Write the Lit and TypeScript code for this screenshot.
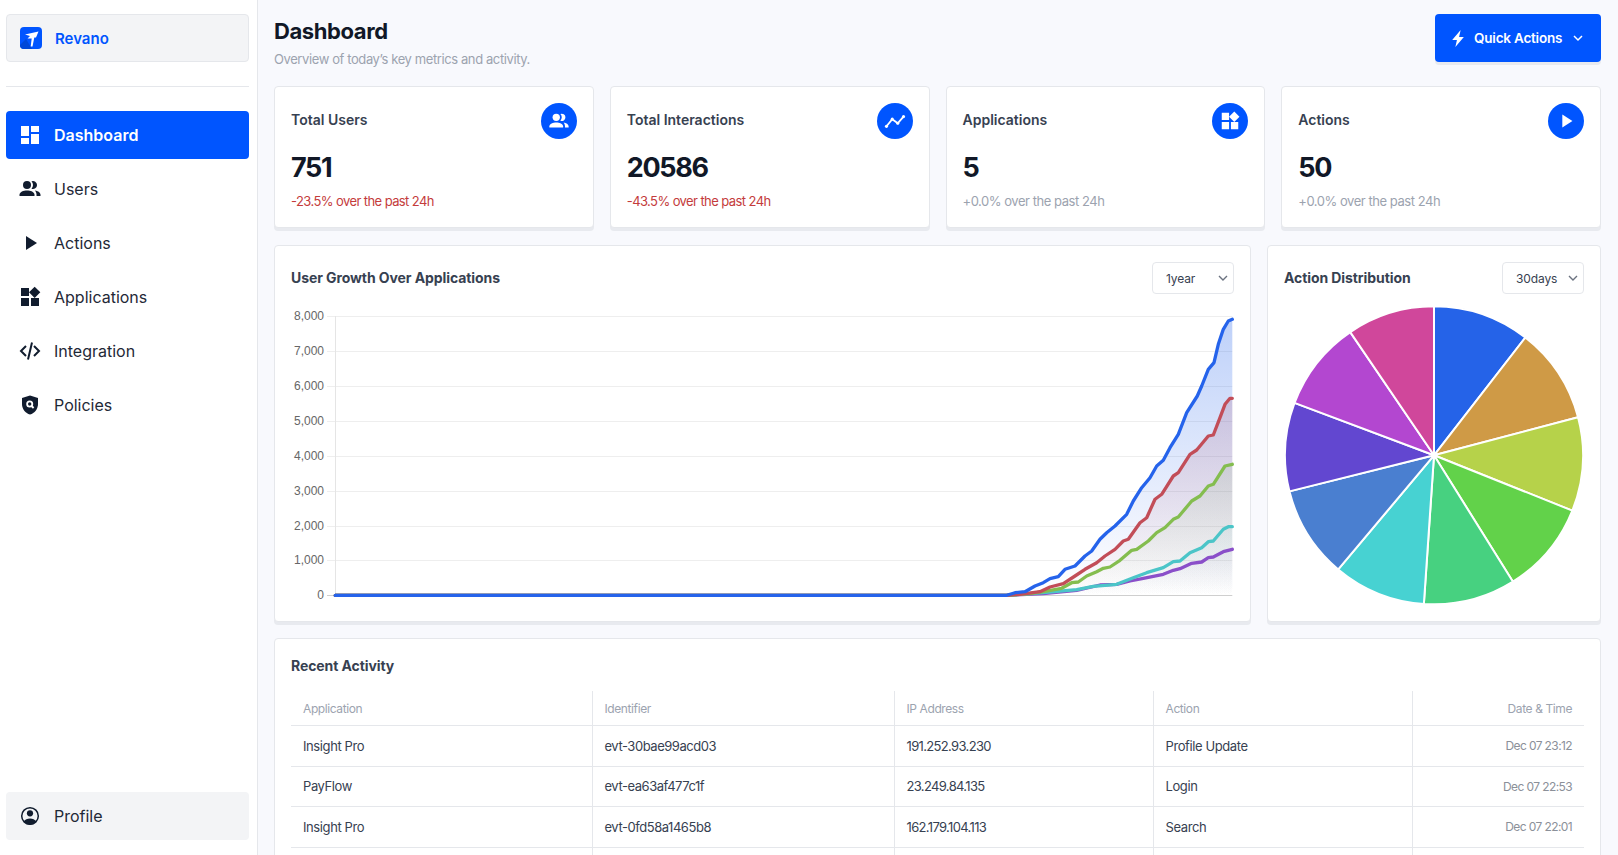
import { LitElement, html, css, svg } from "lit";
import { customElement } from "lit/decorators.js";

const ICONS: Record<string, any> = {
  dashboard: svg`<path fill="currentColor" d="M3 13h8V3H3v10zm0 8h8v-6H3v6zm10 0h8V11h-8v10zm0-18v6h8V3h-8z"/>`,
  users: svg`<g fill="currentColor"><circle cx="9" cy="8" r="4"/><path d="M1.500 19v-1.200C1.500 15 5.500 13.500 9 13.500s7.500 1.500 7.500 4.300V19z"/><path d="M13.500 4.300A4 4 0 1 1 13.500 11.700 5.300 5.300 0 0 0 13.500 4.300z"/><path d="M17 13.500c2.800.4 5.500 1.800 5.500 4.300V19h-4v-1.500c0-1.500-.6-2.800-1.500-4z"/></g>`,
  play: svg`<path fill="currentColor" d="M8 5v14l11-7z"/>`,
  apps: svg`<path fill="currentColor" d="M13 13v8h8v-8h-8zM3 21h8v-8H3v8zM3 3v8h8V3H3zm13.66-1.31L11 7.34 16.66 13l5.66-5.66-5.66-5.65z"/>`,
  code: svg`<path fill="none" stroke="currentColor" stroke-width="2" d="M8 7l-5 5 5 5M16 7l5 5-5 5M14 3.500l-4 17"/>`,
  shield: svg`<path fill="currentColor" d="M12 2.500 4 5v6c0 5 3.400 9.200 8 10.500 4.600-1.300 8-5.500 8-10.500V5z"/><circle cx="11.700" cy="11" r="2.600" fill="none" stroke="#fff" stroke-width="1.800"/><path d="M13.600 13l2 2" stroke="#fff" stroke-width="1.800"/>`,
  profile: svg`<circle cx="12" cy="12" r="8.300" fill="none" stroke="currentColor" stroke-width="1.500"/><circle cx="12" cy="9.300" r="3.100" fill="currentColor"/><path fill="currentColor" d="M5.600 17.600C7 15.600 9.500 14.500 12 14.500s5 1.100 6.400 3.100A9 9 0 0 1 12 21a9 9 0 0 1-6.400-3.400z"/>`,
  trend: svg`<path fill="none" stroke="currentColor" stroke-width="2" d="M2.500 18 9 10l6 4.500L21.500 7"/><g fill="currentColor"><circle cx="2.700" cy="17.800" r="1.700"/><circle cx="9" cy="10" r="1.700"/><circle cx="15" cy="14.500" r="1.700"/><circle cx="21.300" cy="7.200" r="1.700"/></g>`,
};

const icon = (name: string, size = 24) =>
  html`<svg width=${size} height=${size} viewBox="0 0 24 24" aria-hidden="true">${ICONS[name]}</svg>`;

const NAV = [
  ["dashboard", "Dashboard", true],
  ["users", "Users", false],
  ["play", "Actions", false],
  ["apps", "Applications", false],
  ["code", "Integration", false],
  ["shield", "Policies", false],
] as const;

const STATS = [
  ["Total Users", "751", "-23.5% over the past 24h", "users", true],
  ["Total Interactions", "20586", "-43.5% over the past 24h", "trend", true],
  ["Applications", "5", "+0.0% over the past 24h", "apps", false],
  ["Actions", "50", "+0.0% over the past 24h", "play", false],
] as const;

const ROWS = [
  ["Insight Pro", "evt-30bae99acd03", "191.252.93.230", "Profile Update", "Dec 07 23:12"],
  ["PayFlow", "evt-ea63af477c1f", "23.249.84.135", "Login", "Dec 07 22:53"],
  ["Insight Pro", "evt-0fd58a1465b8", "162.179.104.113", "Search", "Dec 07 22:01"],
  ["", "", "", "", ""],
];

// Curve points read in a 3x crop whose origin is (960,300) on the page.
type P = [number, number];
const SERIES: { color: string; pts: P[] }[] = [
  { color: "#8a4fc9", pts: [[140,883],[250,878],[350,868],[420,852],[470,850],[510,840],[550,832],[610,820],[640,808],[660,803],[695,787],[725,783],[745,770],[760,768],[790,752],[817,745]] },
  { color: "#4bc5c8", pts: [[140,883],[250,875],[350,866],[400,856],[470,850],[520,830],[560,815],[610,800],[640,782],[660,780],[690,755],[725,740],[745,722],[760,720],[790,685],[805,677],[817,677]] },
  { color: "#84bd4f", pts: [[140,883],[210,878],[250,872],[305,862],[335,845],[355,843],[380,825],[410,812],[430,802],[450,798],[480,778],[515,748],[530,745],[565,720],[590,695],[615,680],[640,655],[655,648],[695,600],[720,585],[745,555],[760,550],[795,495],[817,490]] },
  { color: "#c24d58", pts: [[140,883],[180,880],[240,872],[270,858],[310,848],[345,825],[375,805],[410,785],[435,765],[465,745],[490,720],[505,715],[540,665],[560,650],[585,595],[605,580],[640,525],[655,515],[690,460],[710,447],[745,405],[760,402],[780,350],[795,310],[810,292],[817,292]] },
  { color: "#2563eb", pts: [[140,883],[165,875],[195,872],[225,855],[250,845],[270,833],[295,827],[315,805],[345,795],[375,765],[395,750],[420,715],[440,695],[465,675],[500,640],[520,600],[545,560],[570,530],[590,495],[610,478],[630,440],[655,400],[680,335],[712,285],[725,255],[745,205],[762,185],[775,130],[790,85],[805,60],[817,55]] },
];

const X0 = 335.3, X1 = 1232.3, Y0 = 594.4, YT = 315;
const page = (p: P): P => [960 + p[0] / 3, 300 + p[1] / 3];
const linePath = (pts: P[]) => {
  const all = [[X0, Y0] as P, ...pts.map(page)];
  return "M" + all.map((p) => `${p[0].toFixed(1)} ${p[1].toFixed(1)}`).join("L");
};

const PIE_CX = 1434, PIE_CY = 454.3, PIE_R = 149;
const PIE_ANGLES = [0, 37.8, 75.2, 111.8, 148, 183.9, 220, 256, 290.6, 325.8, 360];
const PIE_COLORS = ["#2563e8", "#cf9a46", "#b6d24a", "#62d24a", "#47d180", "#47d2d2", "#4a7fd0", "#6247d0", "#b347d0", "#d0479b"];
const polar = (a: number): P => {
  const r = ((a - 90) * Math.PI) / 180;
  return [PIE_CX + PIE_R * Math.cos(r), PIE_CY + PIE_R * Math.sin(r)];
};

@customElement("app-root")
export class AppRoot extends LitElement {
  static styles = css`
    :host {
      display: flex;
      width: 1618px;
      height: 855px;
      overflow: hidden;
      background: #f8f9fd;
      font-family: Inter, "Liberation Sans", sans-serif;
      color: #1f2937;
    }
    .side {
      flex: 0 0 258px;
      box-sizing: border-box;
      height: 855px;
      background: #fff;
      border-right: 1px solid #e5e7eb;
      padding: 14px 8px 15px 6px;
      display: flex;
      flex-direction: column;
    }
    .brand {
      height: 48px;
      box-sizing: border-box;
      display: flex;
      align-items: center;
      gap: 13px;
      padding-left: 13px;
      background: #f3f4f6;
      border: 1px solid #e5e7eb;
      border-radius: 4px;
      color: #0055ff;
      font-weight: 600;
      font-size: 15px;
    }
    .rule {
      height: 1px;
      background: #e5e7eb;
      margin: 24px 0;
    }
    nav { display: flex; flex-direction: column; gap: 6px; flex: 1; }
    .item {
      height: 48px;
      display: flex;
      align-items: center;
      gap: 12px;
      padding-left: 12px;
      border-radius: 4px;
      font-size: 16px;
      color: #1f2937;
    }
    .item svg { color: #111c2e; }
    .item.on { background: #0055ff; color: #fff; font-weight: 600; }
    .item.on svg { color: #fff; }
    .item.alt { background: #f3f4f6; }

    main {
      flex: 1;
      min-width: 0;
      box-sizing: border-box;
      padding: 14px 17px 0 16px;
      letter-spacing: -0.025em;
    }
    .head {
      height: 48px;
      display: flex;
      justify-content: space-between;
      margin-bottom: 24px;
    }
    h1 {
      margin: 4px 0 7px;
      font-size: 22px;
      line-height: 26px;
      font-weight: 700;
      color: #111827;
    }
    .sub { font-size: 13px; line-height: 16px; color: #9ca3af; }
    .quick {
      width: 166px;
      height: 48px;
      box-sizing: border-box;
      border-radius: 4px;
      background: #0055ff;
      box-shadow: 0 3px 0 #e8eaef;
      color: #fff;
      font-size: 13.500px;
      font-weight: 600;
      letter-spacing: -0.015em;
      display: flex;
      align-items: center;
      padding-left: 16px;
    }
    .quick .label { margin: 0 10px 0 9px; }
    .stats {
      display: grid;
      grid-template-columns: repeat(4, 1fr);
      gap: 16px;
      margin-bottom: 17px;
    }
    .card {
      background: #fff;
      border: 1px solid #e5e7eb;
      border-radius: 4px;
      box-shadow: 0 3px 0 #e8eaef;
      box-sizing: border-box;
    }
    .stat { height: 142px; padding: 16px; }
    .stat-top {
      display: flex;
      justify-content: space-between;
      align-items: center;
      height: 36px;
    }
    .stat-title {
      font-size: 14px;
      font-weight: 600;
      letter-spacing: 0;
      color: #374151;
      margin-bottom: 3px;
    }
    .dot {
      width: 36px;
      height: 36px;
      border-radius: 50%;
      background: #0055ff;
      color: #fff;
      display: flex;
      align-items: center;
      justify-content: center;
    }
    .value {
      font-size: 27px;
      line-height: 34px;
      font-weight: 700;
      letter-spacing: -0.05em;
      color: #111827;
      margin-top: 12px;
    }
    .delta {
      font-size: 13px;
      line-height: 16px;
      letter-spacing: -0.035em;
      color: #9ca3af;
      margin-top: 8px;
    }
    .delta.neg { color: #c43c3c; letter-spacing: -0.045em; }

    .charts {
      display: grid;
      grid-template-columns: 1fr 334px;
      gap: 16px;
      margin-bottom: 16px;
    }
    .chart { height: 377px; padding: 16px; }
    .chart-head {
      height: 32px;
      display: flex;
      justify-content: space-between;
      align-items: center;
      margin-bottom: 7px;
    }
    h2 {
      margin: 0;
      font-size: 14px;
      line-height: 18px;
      font-weight: 700;
      letter-spacing: -0.006em;
      color: #374151;
    }
    select {
      height: 32px;
      width: 82px;
      box-sizing: border-box;
      appearance: none;
      -webkit-appearance: none;
      background: #fff url("data:image/svg+xml,%3Csvg xmlns='http://www.w3.org/2000/svg' width='10' height='6'%3E%3Cpath d='M1 1l4 4 4-4' fill='none' stroke='%236b7280' stroke-width='1.400'/%3E%3C/svg%3E") no-repeat right 5px center;
      border: 1px solid #e5e7eb;
      border-radius: 4px;
      padding: 0 16px 0 13px;
      font: 400 12px Inter, "Liberation Sans", sans-serif;
      letter-spacing: -0.01em;
      color: #374151;
    }
    svg.plot { display: block; }
    svg.plot text {
      font: 12px "Liberation Sans", Arial, sans-serif;
      letter-spacing: 0;
      fill: #666;
    }
    .activity { padding: 16px; height: 400px; }
    .activity h2 { margin: 2px 0 16px; }
    table {
      width: 1293px;
      border-collapse: collapse;
      table-layout: fixed;
      font-size: 13px;
    }
    th, td {
      padding: 0 12px;
      text-align: left;
      border-left: 1px solid #e5e7eb;
      border-bottom: 1px solid #e5e7eb;
      white-space: nowrap;
    }
    th:first-child, td:first-child { border-left: 0; }
    th { height: 34px; font-size: 12px; font-weight: 400; color: #9ca3af; }
    td { height: 39.500px; color: #374151; }
    td:nth-child(2) { letter-spacing: -0.035em; }
    td:nth-child(3) { letter-spacing: -0.05em; }
    th:last-child { text-align: right; }
    td:last-child {
      text-align: right;
      font-size: 12px;
      letter-spacing: -0.05em;
      color: #8b9099;
    }
    .c1 { width: 301px; }
    .c2 { width: 302px; }
    .c3, .c4 { width: 259px; }
    .c5 { width: 172px; }
  `;

  renderLine() {
    const ticks = [0, 1, 2, 3, 4, 5, 6, 7, 8];
    return html`<svg class="plot" width="943" height="304" viewBox="291 300 943 304">
      <defs>
        ${SERIES.map(
          (s, i) => svg`<linearGradient id=${"g" + i} gradientUnits="userSpaceOnUse" x1="0" y1=${YT} x2="0" y2=${Y0}>
            <stop offset="0" stop-color=${s.color} stop-opacity="0.3"/>
            <stop offset="1" stop-color=${s.color} stop-opacity="0"/>
          </linearGradient>`
        )}
      </defs>
      ${ticks.map((t) => {
        const y = Math.round(Y0 - ((Y0 - YT) * t) / 8) + 0.5;
        return svg`<path d="M327 ${y}H${X1}" stroke=${t === 0 ? "#cfcfcf" : "#eeeeee"} fill="none"/>
          <text x="324" y=${y + 3} text-anchor="end">${t === 0 ? "0" : t + ",000"}</text>`;
      })}
      <path d="M335.500 315V595" stroke="#e5e5e5" fill="none"/>
      ${SERIES.map((s, i) => {
        const d = linePath(s.pts);
        return svg`<path d="${d}L${X1} ${Y0}Z" fill="url(#g${i})"/>`;
      })}
      ${SERIES.map(
        (s) => svg`<path d=${linePath(s.pts)} fill="none" stroke=${s.color} stroke-width="3.300" stroke-linejoin="round" stroke-linecap="round"/>`
      )}
    </svg>`;
  }

  renderPie() {
    return html`<svg class="plot" width="300" height="304" viewBox="1284 300 300 304">
      ${PIE_COLORS.map((c, i) => {
        const a = polar(PIE_ANGLES[i]);
        const b = polar(PIE_ANGLES[i + 1]);
        return svg`<path fill=${c} stroke="#fff" stroke-width="2" stroke-linejoin="round"
          d="M${PIE_CX} ${PIE_CY}L${a[0]} ${a[1]}A${PIE_R} ${PIE_R} 0 0 1 ${b[0]} ${b[1]}Z"/>`;
      })}
    </svg>`;
  }

  render() {
    return html`
      <aside class="side">
        <div class="brand">
          <svg width="22" height="22" viewBox="0 0 22 22" aria-hidden="true">
            <rect width="22" height="22" rx="4" fill="#0055ff"/>
            <path d="M0 18 6 12l6 10H4a4 4 0 0 1-4-4z" fill="#0048d8"/>
            <path d="M5 7.500 18.500 4.500 16 10.500H14.300L12.500 19.500h-1.800l1-8H7.500l2.500-2.500z" fill="#fff"/>
          </svg>
          <span>Revano</span>
        </div>
        <div class="rule"></div>
        <nav>
          ${NAV.map(
            ([ic, label, on]) => html`<div class="item ${on ? "on" : ""}">${icon(ic)}<span>${label}</span></div>`
          )}
        </nav>
        <div class="item alt">${icon("profile")}<span>Profile</span></div>
      </aside>
      <main>
        <header class="head">
          <div>
            <h1>Dashboard</h1>
            <div class="sub">Overview of today’s key metrics and activity.</div>
          </div>
          <div class="quick">
            <svg width="14" height="17" viewBox="0 0 13 16" aria-hidden="true"><path fill="#fff" d="M9 0 1 9.500h4.500L4 16l8-9.500H7.500z"/></svg>
            <span class="label">Quick Actions</span>
            <svg width="12" height="12" viewBox="0 0 12 12" aria-hidden="true"><path fill="none" stroke="#fff" stroke-width="1.500" d="M2 4l4 4 4-4"/></svg>
          </div>
        </header>
        <section class="stats">
          ${STATS.map(
            ([t, v, d, ic, neg]) => html`<div class="card stat">
              <div class="stat-top"><span class="stat-title">${t}</span><span class="dot">${icon(ic, 22)}</span></div>
              <div class="value">${v}</div>
              <div class="delta ${neg ? "neg" : ""}">${d}</div>
            </div>`
          )}
        </section>
        <section class="charts">
          <div class="card chart">
            <div class="chart-head">
              <h2>User Growth Over Applications</h2>
              <select><option>1year</option><option>30days</option></select>
            </div>
            ${this.renderLine()}
          </div>
          <div class="card chart">
            <div class="chart-head">
              <h2>Action Distribution</h2>
              <select><option>30days</option><option>1year</option></select>
            </div>
            ${this.renderPie()}
          </div>
        </section>
        <section class="card activity">
          <h2>Recent Activity</h2>
          <table>
            <colgroup><col class="c1"/><col class="c2"/><col class="c3"/><col class="c4"/><col class="c5"/></colgroup>
            <thead><tr><th>Application</th><th>Identifier</th><th>IP Address</th><th>Action</th><th>Date &amp; Time</th></tr></thead>
            <tbody>
              ${ROWS.map((r) => html`<tr>${r.map((c) => html`<td>${c}</td>`)}</tr>`)}
            </tbody>
          </table>
        </section>
      </main>
    `;
  }
}
